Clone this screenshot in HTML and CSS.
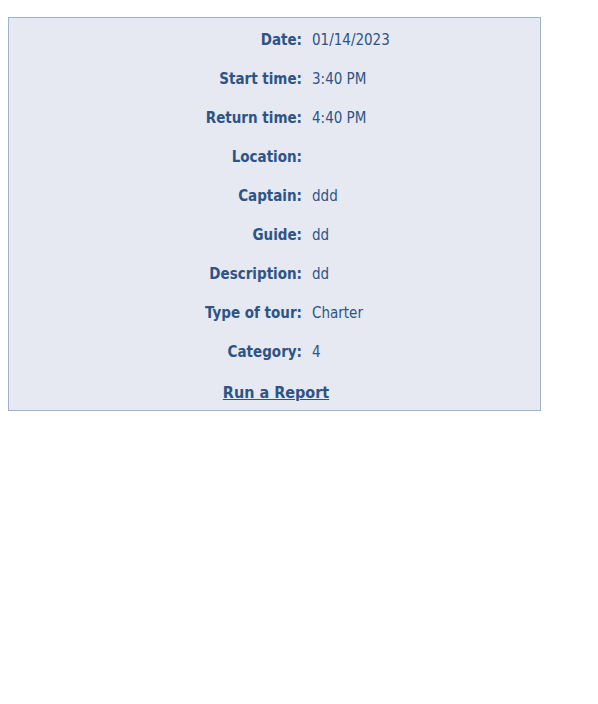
FILE: index.html
```html
<!DOCTYPE html>
<html>
<head>
<meta charset="utf-8">
<link rel="stylesheet" href="styles.css">
</head>
<body>
<div class="panel">
  <div class="details">
    <div class="label">Date:</div><div class="value">01/14/2023</div>
    <div class="label">Start time:</div><div class="value">3:40 PM</div>
    <div class="label">Return time:</div><div class="value">4:40 PM</div>
    <div class="label">Location:</div><div class="value"></div>
    <div class="label">Captain:</div><div class="value">ddd</div>
    <div class="label">Guide:</div><div class="value">dd</div>
    <div class="label">Description:</div><div class="value">dd</div>
    <div class="label">Type of tour:</div><div class="value">Charter</div>
    <div class="label">Category:</div><div class="value">4</div>
  </div>
  <div class="actions"><a href="#" class="report-link">Run a Report</a></div>
</div>
</body>
</html>
```
FILE: styles.css
```css
body {
  margin: 8px;
  font-family: "DejaVu Sans Condensed", "DejaVu Sans", Tahoma, Verdana, sans-serif;
  font-stretch: condensed;
  font-size: 15px;
  color: #2e5486;
  background: #ffffff;
}
.panel {
  margin-top: 9px;
  width: 531px;
  background: #e6e9f1;
  border: 1px solid #9fb1cc;
  padding-top: 2px;
}
.details {
  display: grid;
  grid-template-columns: 293px 1fr;
  column-gap: 10px;
  grid-auto-rows: 39px;
  align-items: center;
}
.label {
  text-align: right;
  font-weight: bold;
}
.value {
  font-weight: normal;
}
.actions {
  height: 36px;
  padding-top: 3px;
  padding-left: 3px;
  display: flex;
  align-items: center;
  justify-content: center;
}
.report-link {
  color: #2e5486;
  font-weight: bold;
  font-size: 16px;
  text-decoration: underline;
}
```
